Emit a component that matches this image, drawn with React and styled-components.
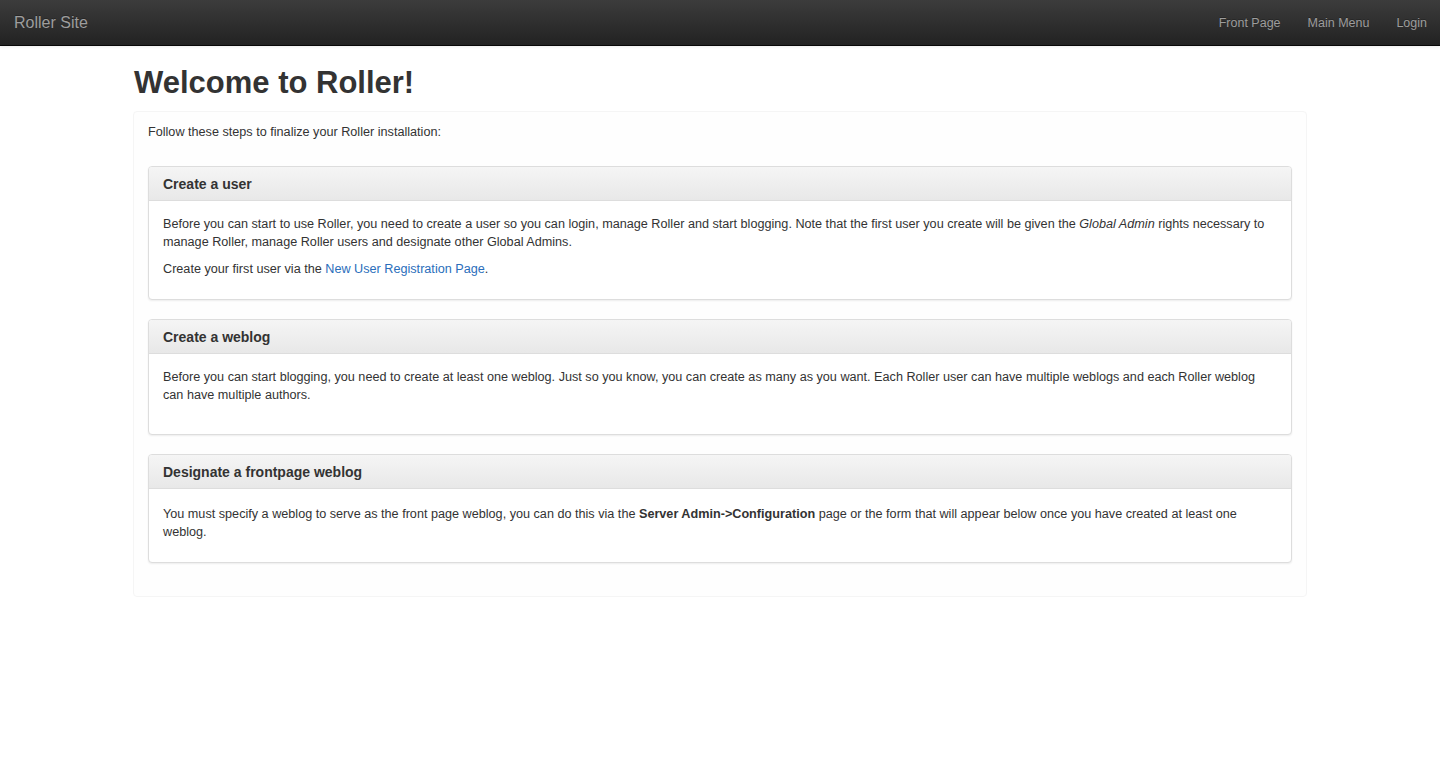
import React from 'react';
import styled, { createGlobalStyle } from 'styled-components';

const GlobalStyle = createGlobalStyle`
  body {
    margin: 0;
    background: #fff;
    font-family: "Liberation Sans", Arial, sans-serif;
    font-size: 12.65px;
    line-height: 18px;
    color: #333;
  }
`;

const Navbar = styled.nav`
  height: 46px;
  box-sizing: border-box;
  display: flex;
  align-items: center;
  justify-content: space-between;
  padding: 0 0 0 14px;
  background: linear-gradient(to bottom, #3c3c3c 0%, #222 100%);
  border-bottom: 1px solid #080808;
  box-shadow: 0 1px 3px rgba(0, 0, 0, 0.08);
`;

const Brand = styled.a`
  font-size: 16px;
  color: #9d9d9d;
  text-decoration: none;
  text-shadow: 0 -1px 0 rgba(0, 0, 0, 0.25);
`;

const NavList = styled.ul`
  display: flex;
  list-style: none;
  margin: 0;
  padding: 0;
`;

const NavLink = styled.a`
  display: block;
  padding: 0 13px 0 14px;
  font-size: 12.5px;
  color: #9d9d9d;
  text-decoration: none;
  text-shadow: 0 -1px 0 rgba(0, 0, 0, 0.25);
`;

const Container = styled.div`
  width: 1174px;
  margin: 0 auto;
`;

const Title = styled.h1`
  margin: 18px 0 9px 1px;
  font-size: 31px;
  line-height: 38px;
  font-weight: 700;
  color: #333;
`;

const Well = styled.div`
  padding: 11px 14px 33px;
  background: #fefefe;
  border: 1px solid #f5f5f5;
  border-radius: 4px;
`;

const Intro = styled.p`
  margin: 0 0 25px;
`;

const Panel = styled.div`
  margin-bottom: 19px;
  border: 1px solid #ddd;
  border-radius: 4px;
  background: #fff;
  box-shadow: 0 1px 2px rgba(0, 0, 0, 0.07);

  &:last-child {
    margin-bottom: 0;
  }
`;

const PanelHeading = styled.div`
  height: 34px;
  box-sizing: border-box;
  display: flex;
  align-items: center;
  padding: 0 14px;
  background: linear-gradient(to bottom, #f5f5f5 0%, #e8e8e8 100%);
  border-bottom: 1px solid #ddd;
  border-radius: 3px 3px 0 0;
`;

const PanelTitle = styled.h3`
  margin: 0;
  font-size: 14px;
  font-weight: 700;
  color: #333;
`;

const PanelBody = styled.div`
  padding: ${p => p.$top || 14}px 22px ${p => p.$bottom || 14}px 14px;
`;

const Para = styled.p`
  margin: 0 0 9px;
`;

const Link = styled.a`
  color: #2a6ebb;
  text-decoration: none;
`;

const steps = [
  {
    title: 'Create a user',
    bottom: 12,
    body: (
      <>
        <Para>
          Before you can start to use Roller, you need to create a user so you can login, manage Roller and start
          blogging. Note that the first user you create will be given the <em>Global Admin</em> rights necessary to
          manage Roller, manage Roller users and designate other Global Admins.
        </Para>
        <Para>
          Create your first user via the <Link href="#">New User Registration Page</Link>.
        </Para>
      </>
    ),
  },
  {
    title: 'Create a weblog',
    bottom: 21,
    body: (
      <Para>
        Before you can start blogging, you need to create at least one weblog. Just so you know, you can create as many
        as you want. Each Roller user can have multiple weblogs and each Roller weblog can have multiple authors.
      </Para>
    ),
  },
  {
    title: 'Designate a frontpage weblog',
    top: 16,
    bottom: 12,
    body: (
      <Para>
        You must specify a weblog to serve as the front page weblog, you can do this via the{' '}
        <strong>Server Admin-&gt;Configuration</strong> page or the form that will appear below once you have created at
        least one weblog.
      </Para>
    ),
  },
];

const App = () => (
  <>
    <GlobalStyle />
    <Navbar>
      <Brand href="#">Roller Site</Brand>
      <NavList>
        <li>
          <NavLink href="#">Front Page</NavLink>
        </li>
        <li>
          <NavLink href="#">Main Menu</NavLink>
        </li>
        <li>
          <NavLink href="#">Login</NavLink>
        </li>
      </NavList>
    </Navbar>
    <Container>
      <Title>Welcome to Roller!</Title>
      <Well>
        <Intro>Follow these steps to finalize your Roller installation:</Intro>
        {steps.map(step => (
          <Panel key={step.title}>
            <PanelHeading>
              <PanelTitle>{step.title}</PanelTitle>
            </PanelHeading>
            <PanelBody $top={step.top} $bottom={step.bottom}>
              {step.body}
            </PanelBody>
          </Panel>
        ))}
      </Well>
    </Container>
  </>
);

export default App;
